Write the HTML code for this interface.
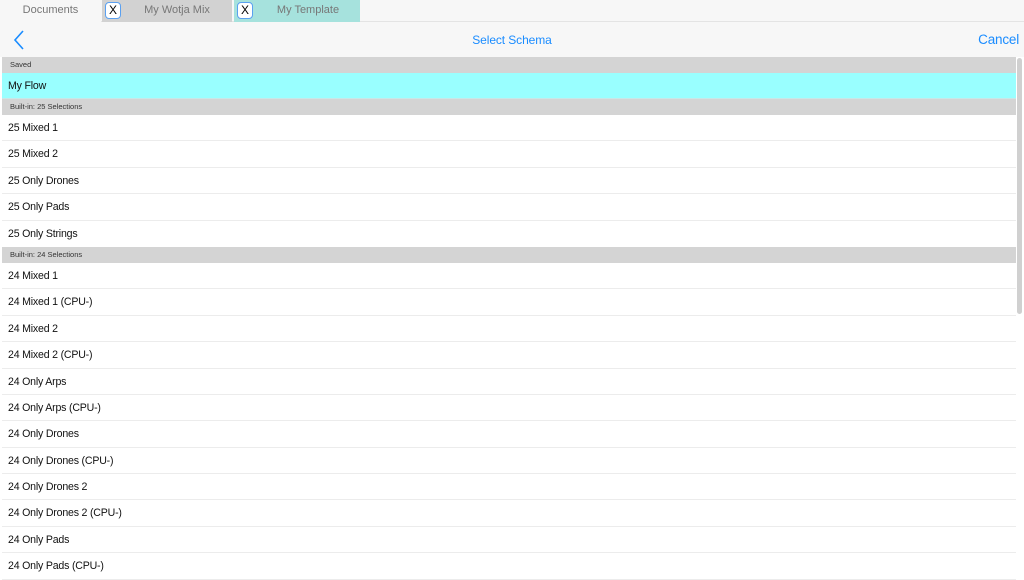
<!DOCTYPE html>
<html><head><meta charset="utf-8"><style>
*{margin:0;padding:0;box-sizing:border-box}
body{width:1024px;height:574px;overflow:hidden;background:#fff;font-family:"Liberation Sans",Arial,sans-serif;position:relative}
.tabs{position:absolute;left:0;top:0;width:1024px;height:22px;background:#f7f7f7;border-bottom:1px solid #e4e4e4}
.tab{position:absolute;top:0;height:22px;font-size:11px;color:#777;line-height:21px;text-align:center}
.x{position:absolute;top:2px;width:16px;height:17px;border:1.5px solid #5aa0f0;border-radius:4px;background:#fff;color:#000;font-size:12px;line-height:14px;text-align:center}
.nav{position:absolute;left:0;top:22px;width:1024px;height:35px;background:#f7f7f7}
.title{position:absolute;left:0;width:1024px;top:11px;text-align:center;color:#1a8cff;font-size:12px;letter-spacing:-0.1px}
.cancel{position:absolute;right:5px;top:10px;color:#1a8cff;font-size:13.5px;letter-spacing:-0.2px}
.list{position:absolute;left:2px;top:57px;width:1014px}
.h{height:16px;background:#d4d4d4;font-size:7.5px;color:#333;padding-left:8px;line-height:16px}
.r{height:26.4px;border-bottom:1px solid #ececec;font-size:10.6px;letter-spacing:-0.2px;color:#111;padding-left:6px;line-height:26px}
.sb{position:absolute;left:1017px;top:58px;width:5px;height:256px;background:#d0d0d0;border-radius:3px}
</style></head><body>
<div class="tabs">
<div class="tab" style="left:0;width:101px;background:#f7f7f7">Documents</div>
<div class="tab" style="left:102px;width:130px;background:#d2d2d2;padding-left:20px">My Wotja Mix</div>
<div class="x" style="left:105px">X</div>
<div class="tab" style="left:234px;width:126px;background:#a6e2dd;padding-left:22px">My Template</div>
<div class="x" style="left:237px">X</div>
</div>
<div class="nav">
<svg style="position:absolute;left:13px;top:8px" width="12" height="20" viewBox="0 0 12 20"><path d="M10 1 L2 10 L10 19" fill="none" stroke="#1a8cff" stroke-width="1.6"/></svg>
<div class="title">Select Schema</div>
<div class="cancel">Cancel</div>
</div>
<div class="list">
<div class="h">Saved</div>
<div class="r" style="background:#99ffff;height:26px;line-height:27px;border-bottom:1px solid #c8e8e8">My Flow</div>
<div class="h">Built-in: 25 Selections</div>
<div class="r">25 Mixed 1</div>
<div class="r">25 Mixed 2</div>
<div class="r">25 Only Drones</div>
<div class="r">25 Only Pads</div>
<div class="r" style="border-bottom:none">25 Only Strings</div>
<div class="h">Built-in: 24 Selections</div>
<div class="r">24 Mixed 1</div>
<div class="r">24 Mixed 1 (CPU-)</div>
<div class="r">24 Mixed 2</div>
<div class="r">24 Mixed 2 (CPU-)</div>
<div class="r">24 Only Arps</div>
<div class="r">24 Only Arps (CPU-)</div>
<div class="r">24 Only Drones</div>
<div class="r">24 Only Drones (CPU-)</div>
<div class="r">24 Only Drones 2</div>
<div class="r">24 Only Drones 2 (CPU-)</div>
<div class="r">24 Only Pads</div>
<div class="r">24 Only Pads (CPU-)</div>
</div>
<div class="sb"></div>
</body></html>
